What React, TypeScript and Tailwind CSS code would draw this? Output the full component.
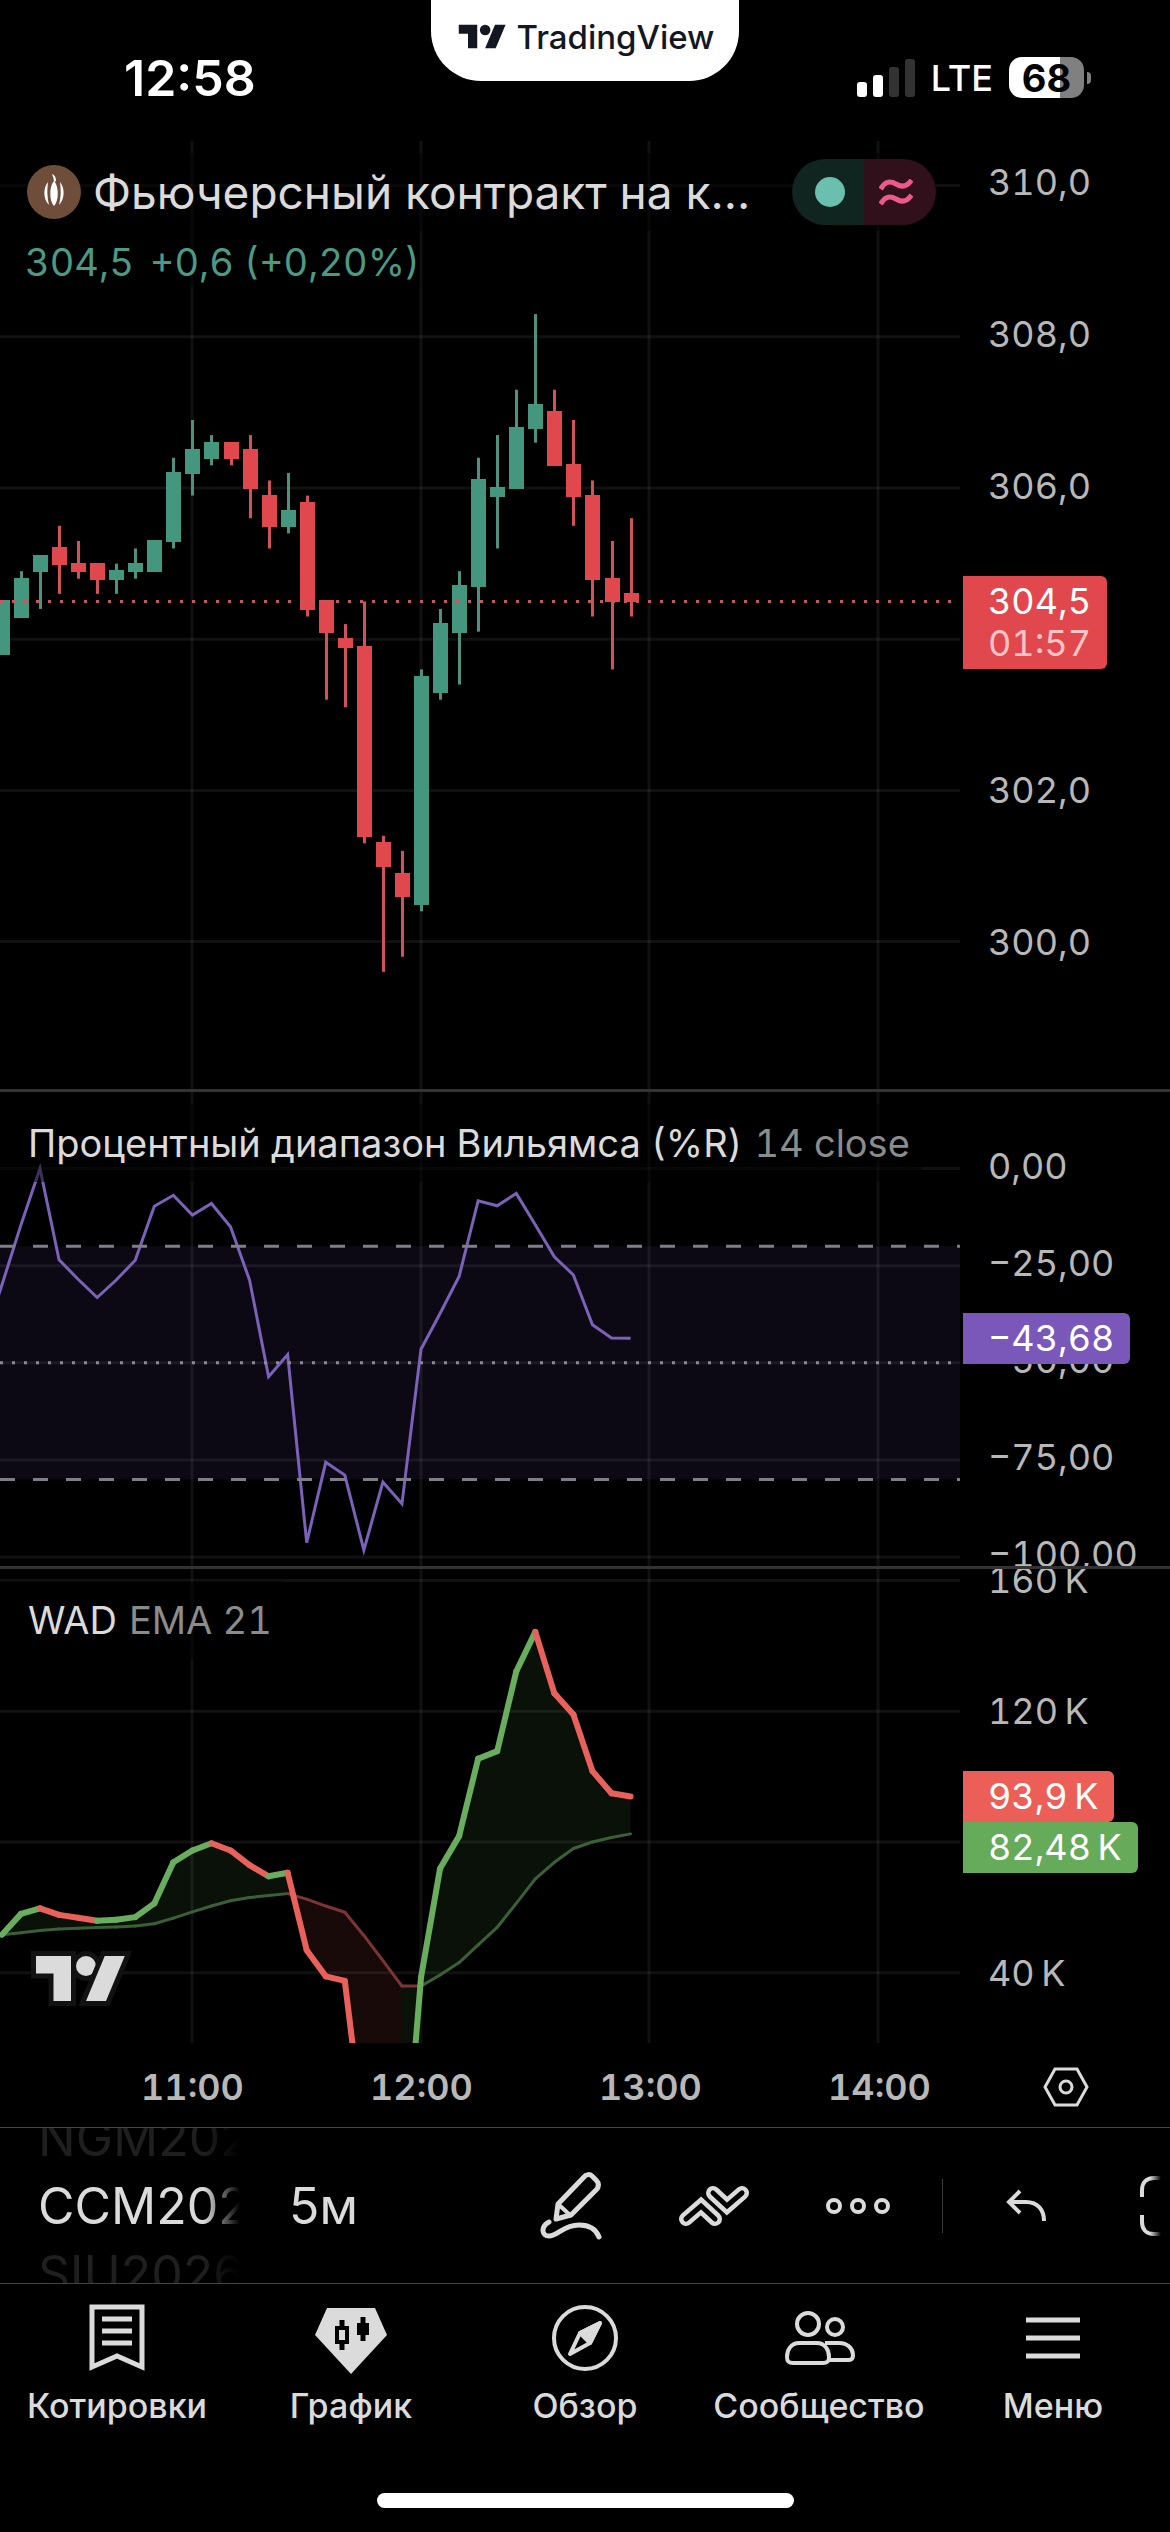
import type { ReactNode } from "react";

type Candle = [open: number, high: number, low: number, close: number];

const GREEN = "#45967f";
const RED = "#e0484d";

const candles: Candle[] = [
  [303.8, 304.5, 303.8, 304.5],
  [304.3, 304.9, 304.3, 304.8],
  [304.9, 305.1, 304.4, 305.1],
  [305.2, 305.5, 304.6, 305.0],
  [305.0, 305.3, 304.8, 304.9],
  [305.0, 305.0, 304.6, 304.8],
  [304.8, 305.0, 304.6, 304.9],
  [304.9, 305.2, 304.8, 305.0],
  [304.9, 305.3, 304.9, 305.3],
  [305.3, 306.4, 305.2, 306.2],
  [306.2, 306.9, 305.9, 306.5],
  [306.4, 306.7, 306.3, 306.6],
  [306.6, 306.6, 306.3, 306.4],
  [306.5, 306.7, 305.6, 306.0],
  [305.9, 306.1, 305.2, 305.5],
  [305.5, 306.2, 305.4, 305.7],
  [305.8, 305.9, 304.3, 304.4],
  [304.5, 304.5, 303.2, 304.1],
  [304.0, 304.2, 303.1, 303.9],
  [303.9, 304.5, 301.3, 301.4],
  [301.3, 301.4, 299.6, 301.0],
  [300.9, 301.2, 299.8, 300.6],
  [300.5, 303.6, 300.4, 303.5],
  [303.3, 304.4, 303.2, 304.2],
  [304.1, 304.9, 303.4, 304.7],
  [304.7, 306.4, 304.1, 306.1],
  [305.9, 306.7, 305.2, 306.0],
  [306.0, 307.3, 306.0, 306.8],
  [306.8, 308.3, 306.6, 307.1],
  [307.0, 307.3, 306.3, 306.3],
  [306.3, 306.9, 305.5, 305.9],
  [305.9, 306.1, 304.3, 304.8],
  [304.8, 305.3, 303.6, 304.5],
  [304.6, 305.6, 304.3, 304.5],
];

const williams = [
  -30, -14.5, 0, -23.5, -28.5, -33.2, -28.7, -23.6, -9.7, -6.9, -12, -9, -15,
  -28.7, -53.6, -47.9, -96.3, -75.6, -78.9, -98.2, -80.7, -86.3, -46.5, -37.3,
  -27.8, -8.3, -9.6, -6.4, -14.5, -22.7, -27.4, -40.2, -43.6, -43.68,
];

const wad = [
  51.6, 58, 59.7, 57.7, 56.8, 55.9, 56.2, 57, 61.2, 73.8, 77.4, 79.6, 77.4,
  72.9, 69.5, 70.6, 46.9, 38.9, 37.5, -10.2, -60, -32.6, 38.5, 71.9, 81.8,
  105.5, 107.8, 132.2, 144.3, 125.5, 119, 101.7, 94.9, 93.9,
];

const ema = [
  51.6, 52.2, 52.9, 53.4, 53.6, 53.8, 54, 54.3, 55, 56.7, 58.6, 60.4, 62, 63,
  63.6, 64.2, 62.5, 60.4, 58.5, 51.4, 43.7, 35.9, 35.9, 39.3, 43.1, 48.5, 53.9,
  61.2, 68.7, 73.8, 78, 80, 81.4, 82.48,
];

const PLOT_WIDTH = 960;
const HOURS = [192, 421, 649, 878];

const barX = (i: number) => 1.9 + i * 19.05;
const priceY = (p: number) => 347 - (p - 306) * 75.6;
const williamsY = (v: number) => 76.5 - v * 3.886;
const wadY = (v: number) => 403.7 - (v - 40) * 3.2675;

const Grid = ({ height, rows }: { height: number; rows: number[] }) => (
  <g stroke="#ffffff" strokeOpacity={0.065} strokeWidth={3}>
    {HOURS.map((x) => (
      <line key={x} x1={x} x2={x} y1={0} y2={height} />
    ))}
    {rows.map((y) => (
      <line key={y} x1={0} x2={PLOT_WIDTH} y1={y} y2={y} />
    ))}
  </g>
);

const Plot = ({
  height,
  label,
  className,
  children,
}: {
  height: number;
  label: string;
  className: string;
  children: ReactNode;
}) => (
  <svg
    role="img"
    aria-label={label}
    viewBox={`0 0 ${PLOT_WIDTH} ${height}`}
    preserveAspectRatio="none"
    className={`col-start-1 row-start-1 w-full ${className}`}
  >
    {children}
  </svg>
);

const Ticks = ({
  labels,
  className,
}: {
  labels: (string | null)[];
  className: string;
}) => (
  <div className={`flex flex-col pl-7 text-[#b8b8b8] ${className}`}>
    {labels.map((label, i) => (
      <span key={i} className="h-[42px] shrink-0">
        {label}
      </span>
    ))}
  </div>
);

const Tag = ({
  className,
  children,
}: {
  className: string;
  children: ReactNode;
}) => (
  <div
    className={`flex w-fit flex-col rounded-r-md pt-1 pr-4 pb-[5px] pl-[25px] text-white ${className}`}
  >
    {children}
  </div>
);

const TvLogo = ({ className }: { className: string }) => (
  <svg viewBox="-2 2 40 22" className={className} aria-hidden="true">
    <g fill="currentColor" paintOrder="stroke">
      <path d="M14 22H7V11H0V4h14v18z" />
      <circle cx="20" cy="8" r="4" />
      <path d="M28 22h-8l7.5-18h8L28 22z" />
    </g>
  </svg>
);

const StatusBar = () => (
  <header className="grid h-[141px] grid-cols-[1fr_308px_1fr] text-white">
    <div className="pt-12 pl-[124px] text-[50px] leading-[60px] font-semibold">
      12:58
    </div>
    <div className="flex h-[81px] items-center justify-center gap-2 rounded-b-[50px] bg-white pb-2 text-[#131722]">
      <TvLogo className="h-[29px] w-[53px]" />
      <span className="text-[33px] leading-10 font-medium">TradingView</span>
    </div>
    <div className="flex h-[155px] items-center justify-end gap-4 pr-[79px]">
      <svg viewBox="0 0 58 38" className="h-[38px] w-[58px]" aria-hidden="true">
        <rect x="0" y="23" width="10" height="15" rx="3" fill="#fff" />
        <rect x="16" y="16" width="10" height="22" rx="3" fill="#fff" />
        <rect x="32" y="8" width="10" height="30" rx="3" fill="#333" />
        <rect x="48" y="0" width="10" height="38" rx="3" fill="#333" />
      </svg>
      <span className="text-[36px] leading-10 font-medium">LTE</span>
      <div className="flex items-center gap-[3px]">
        <div className="flex h-[41px] w-[75px] items-center justify-center rounded-[13px] bg-linear-to-r from-white from-68% to-[#808080] to-68% text-[38px] font-bold text-black">
          68
        </div>
        <div className="h-3 w-1 rounded-r-full bg-[#808080]" />
      </div>
    </div>
  </header>
);

const PricePane = () => (
  <section className="grid grid-cols-[minmax(0,1fr)_210px] border-b-3 border-[#333]">
    <Plot height={948} label="CCM2026, 5м" className="h-[948px]">
      <Grid height={948} rows={[310, 308, 306, 304, 302, 300].map(priceY)} />
      {candles.map(([open, high, low, close], i) => {
        const up = close >= open;
        const x = Math.round(barX(i));
        const top = Math.round(priceY(Math.max(open, close)));
        const bottom = Math.round(priceY(Math.min(open, close))) + 1;
        return (
          <g key={i}>
            <rect
              x={x - 1}
              y={priceY(high)}
              width={3}
              height={priceY(low) - priceY(high)}
              fill={up ? "#4f917e" : "#cf5359"}
            />
            <rect
              x={x - 7}
              y={top - 1}
              width={15}
              height={bottom - top + 1}
              fill={up ? GREEN : RED}
            />
          </g>
        );
      })}
      <line
        x1={0}
        x2={PLOT_WIDTH}
        y1={priceY(304.5)}
        y2={priceY(304.5)}
        stroke="#c4585b"
        strokeWidth={3}
        strokeDasharray="3 9"
      />
    </Plot>

    <div className="z-10 col-start-1 row-start-1 flex flex-col items-start pt-3">
      <div className="flex h-[78px] items-center bg-black/50 pl-[27px]">
        <svg viewBox="0 0 54 54" className="size-[54px]" aria-hidden="true">
          <circle cx="27" cy="27" r="27" fill="#6f4d3b" />
          <g fill="#fff">
            <path d="M25 9c3 1 4 4 4 7l-2 1c0-3-1-5-2-8z" />
            <path d="M27 16c5 5 5 20 0 25-5-5-5-20 0-25z" />
            <path d="M21 17c-5 6-5 17 1 23-2-8-2-15-1-23z" />
            <path d="M33 17c5 6 5 17-1 23 2-8 2-15 1-23z" />
          </g>
        </svg>
        <h1 className="ml-3 w-[699px] text-[46px] leading-[56px] whitespace-nowrap text-[#dbdbdb]">
          Фьючерсный контракт на к...
        </h1>
        <div className="flex h-[66px] w-36 overflow-hidden rounded-full">
          <div className="flex w-1/2 items-center justify-center bg-[#10251f] pl-1">
            <div className="size-[30px] rounded-full bg-[#6bbfae]" />
          </div>
          <div className="flex w-1/2 items-center justify-center bg-[#2f101b] pr-2">
            <svg
              viewBox="0 0 34 26"
              className="h-[26px] w-[34px]"
              aria-hidden="true"
            >
              <g
                fill="none"
                stroke="#ec5a8c"
                strokeWidth="5"
                strokeLinecap="square"
              >
                <path d="M3 8C7 2 12 2 17 5s10 3 14-2" />
                <path d="M3 23c4-6 9-6 14-3s10 3 14-2" />
              </g>
            </svg>
          </div>
        </div>
      </div>
      <p className="flex gap-4 bg-black/50 pt-[6px] pl-[25px] text-[38px] leading-[50px] text-[#4c9a84] tabular-nums">
        <span>304,5</span>
        <span>+0,6 (+0,20%)</span>
      </p>
    </div>

    <div className="relative col-start-2 row-start-1 tabular-nums">
      <Ticks
        className="gap-[110px] pt-5"
        labels={["310,0", "308,0", "306,0", null, "302,0", "300,0"]}
      />
      <div className="absolute top-[435px] left-[3px]">
        <Tag className="bg-[#e0484d]">
          <span>304,5</span>
          <span className="text-[#ffc4c6]">01:57</span>
        </Tag>
      </div>
    </div>
  </section>
);

const Legend = ({ name, params }: { name: string; params: string }) => (
  <h2 className="z-10 col-start-1 row-start-1 mt-3 flex h-[78px] w-fit items-center gap-3 self-start bg-black/50 pr-3 pl-7 text-[38px] leading-[48px] whitespace-nowrap text-[#dbdbdb] tabular-nums">
    {name}
    <span className="text-[#8c8c8c]">{params}</span>
  </h2>
);

const WilliamsPane = () => (
  <section className="grid h-[477px] grid-cols-[minmax(0,1fr)_210px] overflow-hidden border-b-3 border-[#333]">
    <Plot height={474} label="%R" className="h-[474px]">
      <rect
        x={0}
        y={williamsY(-20)}
        width={PLOT_WIDTH}
        height={williamsY(-80) - williamsY(-20)}
        fill="#7e57c2"
        fillOpacity={0.1}
      />
      <Grid height={474} rows={[0, -25, -50, -75, -100].map(williamsY)} />
      <polyline
        points={[[-17, 251], ...williams.map((v, i) => [barX(i), williamsY(v)])].join(" ")}
        fill="none"
        stroke="#7b62b8"
        strokeWidth={3}
      />
      {[-20, -80].map((v) => (
        <line
          key={v}
          x1={0}
          x2={PLOT_WIDTH}
          y1={williamsY(v)}
          y2={williamsY(v)}
          stroke="#807c88"
          strokeWidth={3}
          strokeDasharray="15 18"
        />
      ))}
      <line
        x1={0}
        x2={PLOT_WIDTH}
        y1={williamsY(-50)}
        y2={williamsY(-50)}
        stroke="#8c8894"
        strokeWidth={3}
        strokeDasharray="3 9"
      />
    </Plot>

    <Legend name="Процентный диапазон Вильямса (%R)" params="14 close" />

    <div className="relative col-start-2 row-start-1 tabular-nums">
      <Ticks
        className="gap-[55px] pt-[53px]"
        labels={["0,00", "−25,00", "−50,00", "−75,00", "−100,00"]}
      />
      <div className="absolute top-[221px] left-[3px]">
        <Tag className="bg-[#7a58ba]">
          <span>−43,68</span>
        </Tag>
      </div>
    </div>
  </section>
);

const bandPoints = (from: number, to: number) => {
  const idx = Array.from({ length: to - from + 1 }, (_, k) => from + k);
  return [
    ...idx.map((i) => [barX(i), wadY(wad[i])]),
    ...idx.reverse().map((i) => [barX(i), wadY(ema[i])]),
  ].join(" ");
};

// where the WAD line drops through its average, between bars 15 and 16
const CROSS = [barX(15.27), wadY(64)];

const WadPane = () => (
  <section className="grid h-[474px] grid-cols-[minmax(0,1fr)_210px] overflow-hidden">
    <Plot height={474} label="WAD" className="h-[474px]">
      <Grid height={474} rows={[160, 120, 80, 40].map(wadY)} />
      <g fill="#66ab5a" fillOpacity={0.1}>
        <polygon points={bandPoints(0, 15)} />
        <polygon points={bandPoints(21, 33)} />
      </g>
      <polygon
        points={`${CROSS} ${bandPoints(16, 21)}`}
        fill="#eb5f58"
        fillOpacity={0.1}
      />
      {ema.slice(1).map((v, k) => (
        <line
          key={k}
          x1={barX(k)}
          y1={wadY(ema[k])}
          x2={barX(k + 1)}
          y2={wadY(v)}
          stroke={k >= 15 && k < 22 ? "#7c3534" : "#3b5f37"}
          strokeWidth={3}
          strokeLinecap="round"
        />
      ))}
      {wad.slice(1).map((v, k) => (
        <line
          key={k}
          x1={barX(k)}
          y1={wadY(wad[k])}
          x2={barX(k + 1)}
          y2={wadY(v)}
          stroke={v >= wad[k] ? "#6aad5f" : "#e9615b"}
          strokeWidth={6}
          strokeLinecap="round"
        />
      ))}
    </Plot>

    <Legend name="WAD" params="EMA 21" />

    <div className="z-10 col-start-1 row-start-1 self-end pb-[37px] pl-[31px]">
      <TvLogo className="h-[55px] w-[100px] stroke-[#121212] stroke-4 text-[#dbdbdb]" />
    </div>

    <div className="relative col-start-2 row-start-1 tabular-nums">
      <Ticks
        className="-mt-[10px] gap-[89px]"
        labels={["160\u2009K", "120\u2009K", null, "40\u2009K"]}
      />
      <div className="absolute top-[202px] left-[3px]">
        <Tag className="bg-[#eb5f58]">
          <span>93,9{"\u2009"}K</span>
        </Tag>
        <Tag className="bg-[#66ab5a]">
          <span>82,48{"\u2009"}K</span>
        </Tag>
      </div>
    </div>
  </section>
);

const TimeAxis = () => (
  <div className="flex h-[84px] items-center pt-1 text-[#b8b8b8]">
    <div className="grid flex-1 grid-cols-4 pl-[78px] text-center font-semibold tabular-nums">
      <span>11:00</span>
      <span>12:00</span>
      <span>13:00</span>
      <span>14:00</span>
    </div>
    <div className="flex w-[176px] justify-center pr-8">
      <button type="button" aria-label="Настройки">
        <svg
          viewBox="0 0 46 40"
          className="h-10 w-[46px]"
          fill="none"
          stroke="#dbdbdb"
          strokeWidth="3"
        >
          <path d="M12 2h22l10 18-10 18H12L2 20z" />
          <circle cx="23" cy="20" r="6" />
        </svg>
      </button>
    </div>
  </div>
);

const Toolbar = () => (
  <div className="flex h-[157px] items-center overflow-hidden border-y border-[#444] text-[#dbdbdb]">
    <button
      type="button"
      className="flex w-60 shrink-0 flex-col items-start overflow-hidden mask-r-from-85% pl-[38px] text-[50px] leading-[68px]"
    >
      <span className="text-[#1f1f1f]">NGM202</span>
      <span>CCM202</span>
      <span className="text-[#1f1f1f]">SIU2026</span>
    </button>
    <button type="button" className="ml-[49px] w-[68px] text-[50px]">
      5м
    </button>
    <div className="flex flex-1 items-center">
      <button type="button" aria-label="Рисование" className="ml-[183px]">
        <svg
          viewBox="0 0 62 68"
          className="h-[68px] w-[62px]"
          fill="none"
          stroke="currentColor"
          strokeWidth="5"
          strokeLinejoin="round"
          strokeLinecap="round"
        >
          <path d="M18 32 44 5c2-3 6-3 8-1l4 4c3 3 3 6 1 9L31 43l-15 4z" />
          <path d="m18 32 12 11" strokeWidth="4" />
          <path d="M9 50c-9 5-7 14 0 14 9 0 14-11 30-11 10 0 17 4 20 12" />
        </svg>
      </button>
      <button type="button" aria-label="Индикаторы" className="ml-[76px]">
        <svg
          viewBox="0 0 72 42"
          className="h-[42px] w-[72px]"
          fill="none"
          strokeLinecap="round"
        >
          <g stroke="currentColor" strokeWidth="14">
            <path d="M8 34 23 21l14 13" />
            <path d="M35 8l14 13L64 8" />
          </g>
          <g stroke="#000" strokeWidth="5">
            <path d="M8 34 23 21l14 13" />
            <path d="M35 8l14 13L64 8" />
          </g>
        </svg>
      </button>
      <button type="button" aria-label="Ещё" className="ml-[75px]">
        <svg
          viewBox="0 0 66 18"
          className="h-[18px] w-[66px]"
          fill="none"
          stroke="currentColor"
          strokeWidth="4"
        >
          <circle cx="9" cy="9" r="6" />
          <circle cx="33" cy="9" r="6" />
          <circle cx="57" cy="9" r="6" />
        </svg>
      </button>
      <div className="ml-[51px] h-[54px] w-px bg-[#3a3a3a]" />
      <button type="button" aria-label="Отменить" className="ml-[62px]">
        <svg
          viewBox="0 0 42 34"
          className="h-[34px] w-[42px]"
          fill="none"
          stroke="currentColor"
          strokeWidth="4"
        >
          <path d="M15 2 4 13l11 11" />
          <path d="M4 13h17c12 0 18 8 18 19" />
        </svg>
      </button>
      <button
        type="button"
        aria-label="Полный экран"
        className="ml-[92px] mask-r-from-50%"
      >
        <svg
          viewBox="0 0 22 60"
          className="h-[60px] w-[22px]"
          fill="none"
          stroke="currentColor"
          strokeWidth="4"
        >
          <path d="M22 2h-7C7 2 3 7 3 14v7" />
          <path d="M22 58h-7C7 58 3 53 3 46v-7" />
        </svg>
      </button>
    </div>
  </div>
);

const tabs = [
  {
    label: "Котировки",
    icon: (
      <g fill="none" stroke="currentColor" strokeWidth="5">
        <path d="M11 5h50v60L36 54 11 65z" />
        <path d="M21 17h30M21 29h30M21 41h30" />
      </g>
    ),
  },
  {
    label: "График",
    icon: (
      <>
        <path d="M12 6h48l12 27-36 39L0 33z" fill="currentColor" />
        <path
          d="M27 18v6M27 42v6"
          fill="none"
          stroke="#000"
          strokeWidth="5"
        />
        <path d="M22 26h10v14H22z" fill="none" stroke="#000" strokeWidth="4" />
        <path d="M42 21h12v12H42z" fill="#000" />
        <path d="M48 15v24" stroke="#000" strokeWidth="5" />
      </>
    ),
  },
  {
    label: "Обзор",
    icon: (
      <>
        <circle
          cx="36"
          cy="36"
          r="31"
          fill="none"
          stroke="currentColor"
          strokeWidth="4"
        />
        <g stroke="currentColor" strokeWidth="4" strokeLinejoin="round">
          <path d="m51 21-20 10 10 10z" fill="currentColor" />
          <path d="M51 21 31 31 21 52l20-11z" fill="none" />
        </g>
      </>
    ),
  },
  {
    label: "Сообщество",
    icon: (
      <g fill="none" stroke="currentColor" strokeWidth="4">
        <circle cx="25" cy="22" r="11" />
        <circle cx="52" cy="25" r="8" />
        <path d="M16 41h18c8 0 12 7 12 14 0 5-2 6-6 6H10c-4 0-6-1-6-6 0-7 4-14 12-14z" />
        <path d="M42 41h14c9 0 14 6 14 12 0 3-1 5-4 5H46" />
      </g>
    ),
  },
  {
    label: "Меню",
    icon: (
      <path d="M9 18h54M9 36h54M9 54h54" stroke="currentColor" strokeWidth="5" />
    ),
  },
];

const TabBar = () => (
  <nav className="grid grid-cols-5 pt-[18px] text-[#dbdbdb]">
    {tabs.map(({ label, icon }) => (
      <a key={label} href="#" className="flex flex-col items-center gap-[14px]">
        <svg viewBox="0 0 72 72" className="size-[72px]" aria-hidden="true">
          {icon}
        </svg>
        <span className="text-[34px] leading-9 font-medium">{label}</span>
      </a>
    ))}
  </nav>
);

export default function App() {
  return (
    <div className="min-h-screen overflow-hidden bg-black font-['Inter','Liberation_Sans',sans-serif] text-[36px] leading-[42px]">
      <StatusBar />
      <main>
        <PricePane />
        <WilliamsPane />
        <WadPane />
        <TimeAxis />
      </main>
      <Toolbar />
      <TabBar />
      <div className="mx-auto mt-[69px] h-[15px] w-[417px] rounded-full bg-white" />
    </div>
  );
}
